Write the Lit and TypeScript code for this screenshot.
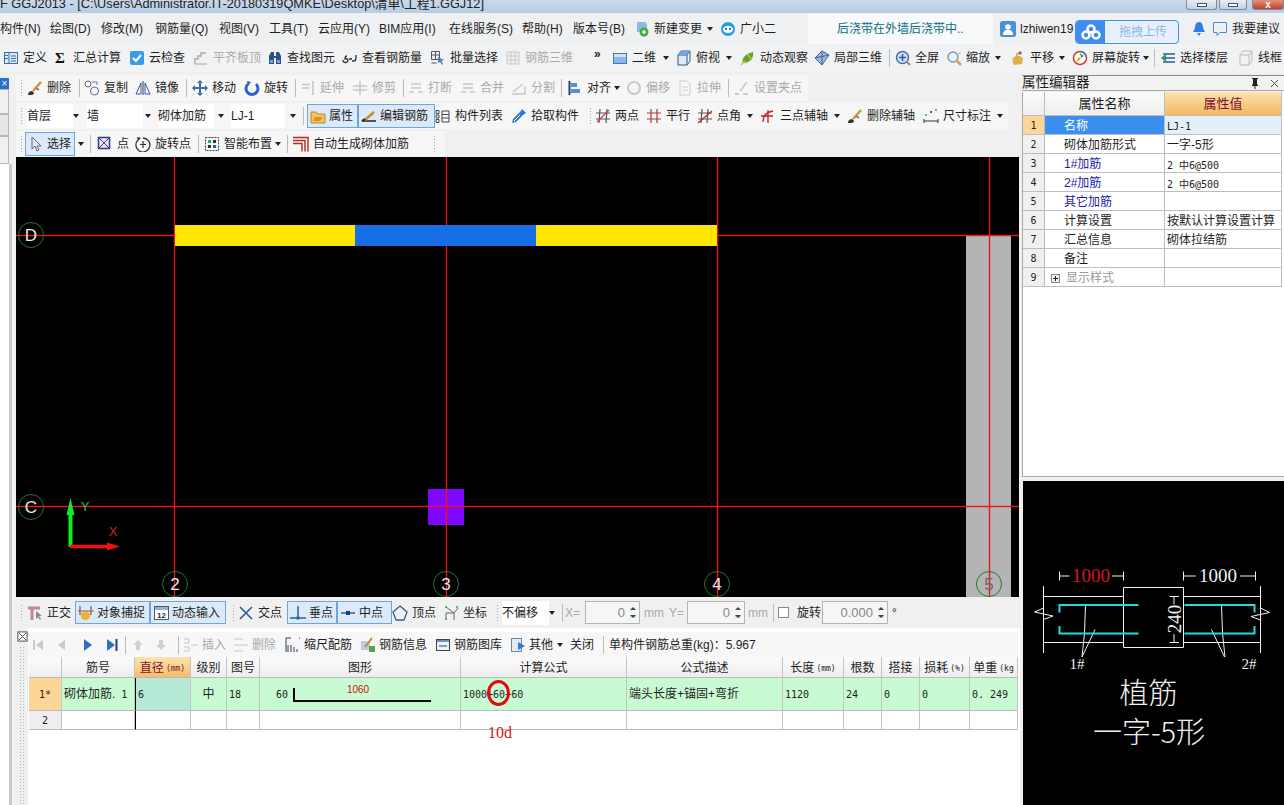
import { LitElement, html, css, svg } from "lit";
import { customElement } from "lit/decorators.js";

const line = (d: string, c = "#333", w = 1) => svg`<path d=${d} fill="none" stroke=${c} stroke-width=${w}/>`;
const fill = (d: string, c: string) => svg`<path d=${d} fill=${c}/>`;

const ICONS: Record<string, any> = {
  def: svg`<rect x="1.5" y="2.5" width="13" height="11" fill="#dce8f6" stroke="#3a6ea5"/>${line("M6 3v10M8 6h5M8 8.500h5M8 11h5M2 5.500h3M2 8.500h3", "#3a6ea5")}`,
  sigma: svg`<text x="2" y="13" class="sig">Σ</text>`,
  cloud: svg`<rect x="1" y="1" width="14" height="14" rx="2" fill="#3c9be8"/>${line("M4 8l3 3 5-6", "#fff", 2)}`,
  lvl: svg`${line("M2 14V9h3V6h3V3h5", "#bbb", 2)}${line("M2 14h12", "#ccc", 2)}`,
  bin: svg`${fill("M2 6l2-4h3v4h2V2h3l2 4v8H9V8H7v6H2z", "#2b4f86")}${fill("M3 10h3v3H3zM10 10h3v3h-3z", "#7fa4d6")}`,
  gls: svg`${line("M1 10a2.500 2.500 0 1 0 5 0c0-2-3-1-3-1 0-2 1-3 2-3M10 11h2c2 0 2-2 2-6M7 9h3", "#333", 1.300)}`,
  batch: svg`${line("M1.500 1.500h8v8h-8zM1.500 5h8M5.500 1.500v8M1.500 13h5", "#556")}${fill("M8 7l6 3-2.500 1 1.500 3-1 1-2-3-2 1z", "#5a7fb5")}`,
  r3d: svg`${line("M2 2h12v12H2zM6 2v12M10 2v12M2 6h12M2 10h12", "#c8c8c8")}`,
  v2d: svg`<rect x="1.500" y="3.500" width="13" height="10" fill="#8db7e8" stroke="#4476b4"/>${fill("M2 4h12v3H2z", "#cfe2f8")}`,
  top: svg`${fill("M2 5h9v10H2z", "#dcecf9")}${line("M2 5h9v10H2zM2 5l3-4h9l-3 4M11 15l3-4V1", "#33597f")}${fill("M5 1h9l-3 4H2z", "#6fa6dc")}`,
  orbit: svg`${fill("M3 13c-2-4 2-9 10-11 1 5-2 11-10 11z", "#5aa832")}${line("M1 15l4-4M7 4l5 6", "#e5b82e", 1.500)}`,
  p3d: svg`${fill("M8 1l7 4-7 10-7-7z", "#9db9dc")}${line("M8 1l7 4-7 10-7-7zM8 1l0 14M1 8l14-3", "#44648e")}`,
  full: svg`<circle cx="7.500" cy="7.500" r="6" fill="#cfe1f6" stroke="#4a6fa5" stroke-width="1.500"/>${line("M7.500 4v7M4 7.500h7", "#2b5aa0", 1.500)}${line("M12 12l3 3", "#b08a2c", 2)}`,
  zoom: svg`<circle cx="7" cy="7" r="5" fill="#e9f1fb" stroke="#7e98b8" stroke-width="1.500"/>${line("M11 11l4 4", "#d9a820", 2.500)}${fill("M13 2l2 1-2 1z", "#d9a820")}`,
  pan: svg`${fill("M4 15c-2-3-2-6 0-8l2-1V3h2v3h2l1 1 2 1-1 6z", "#dcb04a")}${line("M10 1v4M8 3h4", "#555")}`,
  spin: svg`<circle cx="8" cy="8" r="6.500" fill="#fff" stroke="#cf3c2c" stroke-width="1.500"/>${fill("M8 3l4 3-3 2z", "#3aa24c")}${fill("M4 12l3-5 2 2z", "#e0a020")}${line("M8 1.500a6.500 6.500 0 0 1 6 5", "#3a7fd0", 1.500)}`,
  floors: svg`${line("M3 4h12M3 8h12M3 12h12", "#2a5c9c", 1.500)}${fill("M1 8l5-4v8z", "#27a04a")}`,
  wire: svg`${line("M2 5h9v10H2zM2 5l3-4h9l-3 4M11 15l3-4V1", "#bbb")}`,
  doc: svg`${fill("M3 1h8l2 2v8H3z", "#8fb8e8")}<circle cx="10" cy="11" r="4.500" fill="#3fae3f"/>${line("M8 11h4M10 9v4", "#fff", 1.500)}`,
  bot: svg`<circle cx="8" cy="8" r="7" fill="#23a0ea"/><ellipse cx="8" cy="8.500" rx="5" ry="3.500" fill="#fff"/><circle cx="6" cy="8" r="1" fill="#147"/><circle cx="10" cy="8" r="1" fill="#147"/>`,
  user: svg`<rect x="0" y="0" width="16" height="16" rx="2.500" fill="#4a90d8"/><circle cx="8" cy="6" r="2.800" fill="#fff"/>${fill("M3 14c0-4 2-5 5-5s5 1 5 5z", "#fff")}`,
  bell: svg`${fill("M8 1c3 0 4 3 4 6l2 4H2l2-4c0-3 1-6 4-6zM6 12h4l-2 3z", "#2f7fe0")}`,
  say: svg`${line("M1.500 1.500h13v10H8l-3 3v-3H1.500z", "#3f8ee0")}${line("M5 6.500h.1M8 6.500h.1M11 6.500h.1", "#3f8ee0", 1.500)}`,
  brush: svg`${fill("M1 15c0-3 2-4 4-4l2 2c0 2-3 2-6 2z", "#333")}${line("M6 11l8-9", "#c69a3a", 2.500)}${line("M9 8l3 2", "#8a6ec0", 2)}`,
  copy: svg`<circle cx="4" cy="4" r="3" fill="none" stroke="#667"/><circle cx="10.500" cy="11" r="4" fill="none" stroke="#667"/>${line("M8 2h5v3", "#4a7fc0")}`,
  mir: svg`${line("M8 1v14", "#336")}${line("M6 3L1 14h5zM10 3l5 11h-5z", "#2f5f9f")}`,
  move: svg`${fill("M8 0l3 3H9v4h4V5l3 3-3 3V9H9v4h2l-3 3-3-3h2V9H3v2L0 8l3-3v2h4V3H5z", "#3d6eb0")}`,
  rot: svg`${line("M4 4a6 6 0 1 0 8 0", "#2d62c8", 3)}${fill("M3 1l4 1-3 4z", "#2d62c8")}`,
  ext: svg`${line("M2 8h7M2 4.500h8M13 1v14", "#c4c4c4", 1.500)}`,
  trim: svg`${line("M1 6h14M1 10h14M8 1v14", "#c8c8c8", 1.500)}`,
  brk: svg`${line("M1 12h5M10 12h5M3 4h10M3 8h10", "#c8c8c8", 1.500)}`,
  spl: svg`${line("M1 14h14M14 14V6M2 12l10-8", "#c8c8c8", 1.500)}`,
  align: svg`${line("M2.500 1v14", "#1c3f7a", 2)}${fill("M4 3h6v4H4zM4 9h9v4H4z", "#5b8fd0")}`,
  off: svg`<circle cx="8" cy="8" r="6" fill="none" stroke="#c8c8c8" stroke-width="2"/>`,
  str: svg`${line("M3 1h7l3 3v11H3z", "#ccc")}${line("M6 7h5M6 10h5", "#ccc")}`,
  grip2: svg`${line("M1 14h4M9 14h5", "#bbb", 1.500)}${line("M6 11l7-9", "#ccc", 2)}`,
  prop: svg`${fill("M1 4h5l2 2h7v9H1z", "#f0c860")}${line("M1 4h5l2 2h7v9H1z", "#b88a20")}${fill("M5 9h8l-3 4H3z", "#e8892a")}`,
  edit: svg`${line("M1 13h14", "#222", 1.500)}${line("M4 12l9-8", "#c09030", 2.500)}${line("M1 13l3-2", "#222", 2)}`,
  list: svg`${line("M1 2.500h3v3H1zM1 7h3v3H1zM1 11.500h3v3H1zM7 3h7v11H7zM7 6.500h7M7 10h7", "#445")}`,
  pick: svg`${fill("M11 1l4 4-3 2-1 1-6 6-4 1 1-4 6-6 1-1z", "#2d7ad6")}${line("M3 13l6-6", "#fff")}`,
  two: svg`${line("M5 1l-1 14M12 1l-1 14M1 5h14M1 11h14", "#4a5668", 1.200)}${line("M2 14L14 2", "#c84040", 1.200)}`,
  par: svg`${line("M5 1v14M11 1v14M1 5h14M1 11h14", "#a33a3a", 1.200)}`,
  ang: svg`${line("M5 1l-1 14M11 1l-1 14M1 5h14M1 11h14", "#555", 1.200)}${line("M1 15L15 3", "#d02020", 1.300)}`,
  tri: svg`${line("M3 14c0-6 3-10 10-11M8 2v13M1 8h12", "#c82020", 1.300)}`,
  dim: svg`${line("M1 13h14M1 11v4M15 11v4", "#333")}<circle cx="3" cy="7" r="1" fill="#2a7"/><circle cx="8" cy="4" r="1" fill="#333"/><circle cx="13" cy="2" r="1" fill="#2a7"/>`,
  cur: svg`${line("M4 1v12l3-3 2 5 2-1-2-4h4z", "#667")}`,
  pt: svg`<rect x="1.500" y="1.500" width="11" height="11" fill="#dfe4f4" stroke="#2c3f90" stroke-width="1.500"/>${line("M2 2l10 10M12 2L2 12", "#7c2c60")}`,
  rpt: svg`${line("M3 4a7 7 0 1 0 5-2", "#334", 1.300)}${line("M8 5v7M5 8.500h6", "#334", 1.200)}${fill("M2 1l4 1-3 3z", "#334")}`,
  smart: svg`<rect x="1.500" y="1.500" width="13" height="13" fill="none" stroke="#444" stroke-dasharray="2 1"/><rect x="4" y="4" width="3" height="3" fill="#2a6"/><rect x="9" y="9" width="3" height="3" fill="#26a"/><rect x="9" y="4" width="3" height="3" fill="#333"/><rect x="4" y="9" width="3" height="3" fill="#333"/>`,
  auto: svg`${line("M0 1.500h15v14M0 4.500h12v11M0 7.500h9v8", "#b42a2a", 1.400)}`,
  ortho: svg`${line("M1 3h12M5 3v12", "#c08a8a", 3)}${fill("M9 6l0 8 2-2 2 3 1-1-2-3h3z", "#889")}`,
  snap: svg`${line("M2 1v9M13 1v9", "#445")}${fill("M3 9c1-3 8-3 9 0 1 4-2 6-5 6s-5-3-4-6z", "#e6b73a")}${line("M0 6h16", "#d04a20")}`,
  dyn: svg`<rect x="1.500" y="1.500" width="14" height="13" fill="#fff" stroke="#556"/>${fill("M2 2h13v3H2z", "#8db4df")}<text x="4" y="13" class="mini">12</text>`,
  cross: svg`${line("M2 2l12 12M14 2L2 14", "#2d5f9e", 1.700)}`,
  perp: svg`${line("M0 13h16", "#2d5f9e", 1.500)}${line("M8 1v11", "#2d5f9e", 1.500)}<rect x="6.500" y="11.500" width="3" height="3" fill="#2d5f9e"/>`,
  mid: svg`${line("M1 8h14", "#2d5f9e", 1.500)}<rect x="6" y="6" width="4" height="4" fill="#1d3f7e"/>`,
  apex: svg`${line("M8 1l7 6-3 8H4L1 7z", "#2d5f9e", 1.300)}`,
  coord: svg`${line("M3 2l8 6v7M11 8l4-5M3 14V8l8 0", "#667", 1)}<circle cx="3" cy="2" r="1" fill="#2a7"/><circle cx="14" cy="2" r="1" fill="#2a7"/><circle cx="3" cy="14" r="1" fill="#2a7"/>`,
  first: svg`${line("M4 3v10", "#c4c8d0", 2)}${fill("M13 3v10L6 8z", "#c4c8d0")}`,
  prev: svg`${fill("M11 3v10L4 8z", "#c4c8d0")}`,
  next: svg`${fill("M5 2v12l8-6z", "#2f6fc4")}`,
  last: svg`${fill("M3 2v12l8-6z", "#2f6fc4")}${line("M12.500 2v12", "#1f3f84", 2)}`,
  up: svg`${fill("M8 3l5 5h-3v5H6V8H3z", "#cfcfcf")}`,
  down: svg`${fill("M8 13l5-5h-3V3H6v5H3z", "#cfcfcf")}`,
  ins: svg`${line("M1 2h5v4H1M1 10h5v4H1M8 8h7", "#c4c4c4")}`,
  del: svg`${line("M1 2h9M1 8h9M1 14h9M10 8h5", "#c4c4c4")}`,
  scale: svg`${line("M1 15V1h5M14 1h1M3 15V8M6 15V8M9 15v-5M12 15v-3", "#2c3e5a")}`,
  info: svg`${fill("M1 4h9v9H1z", "#b9cde8")}${line("M12 1L5 10", "#c58a2a", 2)}${fill("M9 9h6v6H9z", "#5d9e4f")}`,
  lib: svg`<rect x="1.500" y="2.500" width="13" height="11" fill="#eef4fb" stroke="#345"/>${fill("M2 3h12v2H2z", "#6d93c4")}${line("M4 9h8", "#345")}`,
  other: svg`<rect x="1.500" y="1.500" width="10" height="13" fill="#e4ecf6" stroke="#6688aa"/>${fill("M8 5l7 4-7 4z", "#2f7ad6")}`,
  close: svg`<rect x="1" y="1" width="10" height="10" fill="#fff" stroke="#444"/>${line("M2 2l8 8M10 2l-8 8", "#444")}`,
};

type Item = [number, string, string?, string?, number?];

const MENU: Item[] = [
  [0, "", "构件(N)"], [50, "", "绘图(D)"], [101, "", "修改(M)"], [155, "", "钢筋量(Q)"], [219, "", "视图(V)"], [269, "", "工具(T)"],
  [318, "", "云应用(Y)"], [379, "", "BIM应用(I)"], [449, "", "在线服务(S)"], [522, "", "帮助(H)"], [573, "", "版本号(B)"],
  [634, "doc", "新建变更"], [707, "caret"], [720, "bot", "广小二"], [808, "", "后浇带在外墙后浇带中..", "n", 185],
  [1000, "user", "lzhiwen19"], [1191, "bell"], [1212, "say", "我要建议"],
];
const MAIN: Item[] = [
  [3, "def", "定义"], [53, "sigma", "汇总计算"], [129, "cloud", "云检查"], [193, "lvl", "平齐板顶", "g"], [267, "bin", "查找图元"],
  [342, "gls", "查看钢筋量"], [430, "batch", "批量选择"], [505, "r3d", "钢筋三维", "g"], [594, "", "»", "t"], [612, "v2d", "二维"], [663, "caret"],
  [676, "top", "俯视"], [726, "caret"], [740, "orbit", "动态观察"], [814, "p3d", "局部三维"], [889, "sep"], [895, "full", "全屏"], [946, "zoom", "缩放"],
  [995, "caret"], [1010, "pan", "平移"], [1059, "caret"], [1072, "spin", "屏幕旋转"], [1143, "caret"], [1154, "sep"], [1160, "floors", "选择楼层"], [1238, "wire", "线框"],
];
const BAR2: Item[] = [
  [20, "grip"], [27, "brush", "删除"], [79, "sep"], [84, "copy", "复制"], [135, "mir", "镜像"], [186, "sep"], [192, "move", "移动"], [244, "rot", "旋转"],
  [295, "sep"], [300, "ext", "延伸", "g"], [352, "trim", "修剪", "g"], [403, "sep"], [408, "brk", "打断", "g"], [460, "brk", "合并", "g"], [511, "spl", "分割", "g"],
  [561, "sep"], [567, "align", "对齐"], [614, "caret"], [626, "off", "偏移", "g"], [677, "str", "拉伸", "g"], [728, "sep"], [734, "grip2", "设置夹点", "g"],
];
const BAR3: Item[] = [
  [20, "grip"], [27, "", "首层", "c", 46], [73, "caret"], [87, "", "墙", "c", 56], [145, "caret"], [158, "", "砌体加筋", "c", 56], [218, "caret"], [231, "", "LJ-1", "c", 54],
  [290, "caret"], [303, "sep"], [307, "prop", "属性", "a"], [358, "edit", "编辑钢筋", "a"], [435, "list", "构件列表"], [511, "pick", "拾取构件"], [589, "grip"], [595, "two", "两点"],
  [646, "par", "平行"], [697, "ang", "点角"], [747, "caret"], [760, "tri", "三点辅轴"], [834, "caret"], [847, "brush", "删除辅轴"], [923, "dim", "尺寸标注"], [997, "caret"],
];
const BAR4: Item[] = [
  [20, "grip"], [25, "cur", "选择", "a", 50], [78, "caret"], [90, "sep"], [97, "pt", " 点"], [135, "rpt", "旋转点"], [198, "sep"], [204, "smart", "智能布置"],
  [275, "caret"], [287, "sep"], [293, "auto", "自动生成砌体加筋"], [433, "grip"],
];
const SNAP: Item[] = [
  [20, "grip"], [27, "ortho", "正交"], [75, "snap", "对象捕捉", "a"], [150, "dyn", "动态输入", "a"], [226, "sep0"], [232, "grip"], [238, "cross", "交点"], [287, "perp", "垂点", "a"], [337, "mid", "中点", "a"],
  [392, "apex", "顶点"], [443, "coord", "坐标"], [496, "grip"], [502, "", "不偏移", "c", 48], [549, "caret"], [562, "sep"], [565, "", "X=", "g"], [585, "input", "0", "", 55], [644, "", "mm", "g"],
  [669, "", "Y=", "g"], [687, "input", "0", "", 58], [748, "", "mm", "g"], [773, "sep"], [778, "check"], [797, "", "旋转"], [822, "input", "0.000", "", 66], [892, "", "°"],
];
const GRIDBAR: Item[] = [
  [30, "first"], [54, "prev"], [79, "next"], [104, "last"], [125, "sep"], [130, "up"], [153, "down"], [178, "sep"], [183, "ins", "插入", "g"], [233, "del", "删除", "g"],
  [285, "scale", "缩尺配筋"], [360, "info", "钢筋信息"], [435, "lib", "钢筋图库"], [510, "other", "其他"], [557, "caret"], [570, "", "关闭"], [603, "sep"], [609, "", "单构件钢筋总重(kg)：5.967"],
];

const PROPS: [string, string, string?, boolean?][] = [
  ["名称", "LJ-1", "", true], ["砌体加筋形式", "一字-5形"], ["1#加筋", "2 中6@500", "b", true], ["2#加筋", "2 中6@500", "b", true], ["其它加筋", "", "b"],
  ["计算设置", "按默认计算设置计算"], ["汇总信息", "砌体拉结筋"], ["备注", ""], ["显示样式", "", "g"],
];
const HEAD: [string, string?][] = [["筋号"], ["直径", "(mm)"], ["级别"], ["图号"], ["图形"], ["计算公式"], ["公式描述"], ["长度", "(mm)"], ["根数"], ["搭接"], ["损耗", "(%)"], ["单重", "(kg"]];

@customElement("app-root")
export class AppRoot extends LitElement {
  static styles = css`
    :host { display: block; width: 1284px; height: 805px; overflow: hidden; background: #f0f0f0; position: relative;
      font: 12px/16px "Liberation Sans", "Noto Sans CJK SC", sans-serif; color: #1e1e1e; }
    svg { display: block; flex: none; }
    .title { height: 13px; overflow: hidden; display: flex; background: linear-gradient(#c9d9e9, #b6cde3); font-size: 12.750px; line-height: 8px; color: #222; white-space: nowrap; }
    .winbtns { margin-left: auto; display: flex; gap: 2px; }
    .winbtn { height: 10px; border: 1px solid #7b8da0; border-top: 0; border-radius: 0 0 3px 3px; background: linear-gradient(#e6edf4, #c4d2e0); box-sizing: border-box; display: flex; align-items: center; justify-content: center; }
    .winbtn.min { width: 31px; } .winbtn.max { width: 28px; margin-right: 3px; } .winbtn.cls { width: 32px; background: linear-gradient(#e4907c, #c2402c); color: #fff; font-size: 10px; line-height: 10px; font-weight: bold; }
    .glyph { width: 10px; height: 4px; border: 1px solid #456; box-sizing: border-box; background: #fff; }
    .bar { display: flex; align-items: center; white-space: nowrap; box-sizing: border-box; }
    .cell { flex: none; display: flex; align-items: center; gap: 4px; height: 100%; box-sizing: border-box; overflow: visible; }
    .g { color: #aaa; }
    .hi { margin-top: -9px; font-weight: bold; }
    .menu { height: 31px; background: #eff0f1; width: 1284px; }
    .maintool { height: 28px; background: #f1f2f3; width: 1284px; }
    .notice { background: #f8f9fa; height: 30px; color: #0c6d80; display: flex; align-items: center; padding-left: 29px; box-sizing: border-box; }
    .active { background: #dbe9f8; border: 1px solid #6ea6dc; height: 24px; padding-left: 2px; box-sizing: border-box; display: flex; align-items: center; gap: 3px; width: 100%; }
    .combo { background: #fff; height: 24px; padding-left: 0; display: flex; align-items: center; }
    .caret { width: 0; height: 0; border: 3px solid transparent; border-top: 4px solid #222; border-bottom: 0; }
    .sepl { width: 1px; height: 18px; background: #bdbdbd; }
    .gripl { width: 3px; height: 18px; background-image: radial-gradient(circle, #aaa 1px, transparent 1px); background-size: 3px 3px; }
    .sig { font: bold 15px "Liberation Serif", serif; fill: #111; }
    .mini { font: bold 8px "Liberation Sans", sans-serif; fill: #234; }
    .input { height: 24px; border: 1px solid #b4b4b4; background: #f6f6f6; box-sizing: border-box; display: flex; align-items: center; justify-content: flex-end; color: #888; gap: 5px; padding-right: 3px; width: 100%; font-size: 13px; }
    .spin { display: flex; flex-direction: column; gap: 5px; }
    .spin i { display: block; width: 0; height: 0; border: 3px solid transparent; }
    .spin .u { border-bottom: 3px solid #444; border-top: 0; } .spin .d { border-top: 3px solid #444; border-bottom: 0; }
    .check { width: 11px; height: 11px; border: 1px solid #888; background: #fff; box-sizing: border-box; }
    .overlay { position: absolute; left: 1075px; top: 20px; width: 104px; height: 24px; border: 1px solid #4a90e8; border-radius: 4px; background: #e7f0fc; box-sizing: border-box; display: flex; align-items: center; color: #90b6ea; overflow: hidden; font-size: 12px; }
    .ovl { width: 29px; height: 100%; background: #3f8df3; display: flex; align-items: center; justify-content: center; margin-right: 14px; flex: none; }
    .body { display: flex; height: 733px; }
    .left { width: 1020px; display: flex; flex: none; }
    .strip { width: 16px; flex: none; display: flex; flex-direction: column; position: relative; background: #f0f0f0; }
    .strip-x { margin-top: 6px; height: 11px; width: 9px; background: #2a6fd0; display: flex; align-items: center; justify-content: center; color: #fff; font-size: 10px; line-height: 10px; }
    .strip-p { width: 9px; box-sizing: border-box; border: 1px solid #b8b8b8; border-left: 0; }
    .strip-p.a { height: 25px; } .strip-p.b { height: 22px; background: #e6e6e6; } .strip-p.c { height: 28px; }
    .strip-w { flex: 1; width: 9px; background: #fff; border-right: 3px solid #c9c9c9; }
    .main { width: 1004px; flex: none; display: flex; flex-direction: column; }
    .tools { height: 85px; display: flex; flex-direction: column; padding-top: 3px; box-sizing: border-box; gap: 2px; }
    .tb { height: 26px; background: #f6f6f6; flex: none; }
    .tb.short { height: 25px; }
    .canvas { height: 440px; width: 1003px; background: #000; }
    .canvas svg { width: 1003px; height: 440px; }
    .canvas text { font-family: "Liberation Sans", sans-serif; font-size: 17px; text-anchor: middle; dominant-baseline: central; fill: #e8e8e8; }
    .canvas text.five { fill: #666; }
    .canvas text.ax { font-size: 13px; font-weight: normal; }
    .snapbar { height: 31px; background: #f0f0f0; flex: none; }
    .snapbar .cell .active, .snapbar .input { height: 23px; }
    .gridp { flex: 1; display: flex; position: relative; background: #fff; }
    .gripcol { width: 12px; flex: none; background: #f0f0f0; display: flex; flex-direction: column; align-items: center; padding-top: 3px; gap: 4px; }
    .gripcol i { width: 6px; flex: 1; background-image: radial-gradient(circle, #bbb 1px, transparent 1px); background-size: 3px 3px; }
    .gridm { flex: 1; margin-right: 2px; display: flex; flex-direction: column; }
    .gtb { height: 25px; margin-top: 4px; background: #f7f7f7; flex: none; }
    .gtb .cell { gap: 3px; }
    .trow { display: grid; grid-template-columns: 33px 73px 56px 36px 33px 201px 166px 156px 61px 38px 38px 50px 48px; margin-left: 1px; }
    .trow > div { border-right: 1px solid #c4c4c4; border-bottom: 1px solid #bbb; box-sizing: border-box; display: flex; align-items: center; overflow: hidden; white-space: nowrap; padding-left: 2px; }
    .thead { height: 21px; } .thead > div { justify-content: center; padding: 2px 0 0; font-size: 12px; background: linear-gradient(#fbfbfb, #eee); }
    .thead > .hot { background: linear-gradient(#fde3ae, #f6bd68); color: #7a1030; }
    .unit { font: 8px "DejaVu Sans Mono", monospace; margin-left: 2px; }
    .r1 { height: 33px; background: #c8fbd2; } .r2 { height: 19px; }
    .rn { justify-content: center; padding: 0 !important; font: 10px "DejaVu Sans Mono", monospace; background: #eee; }
    .r1 .rn { background: #fdd596; }
    .d { background: #b6ead6; border-left: 1px solid #000; }
    .r2 .d { background: #fff; }
    .m { font: 10px "DejaVu Sans Mono", monospace; }
    .ctr { justify-content: center; padding: 0 !important; }
    .shape { padding-left: 16px !important; gap: 5px; position: relative; }
    .shape .m { font-size: 10px; }
    .sh1060 { width: 138px; height: 14px; margin-top: 2px; border-left: 2px solid #000; border-bottom: 2px solid #000; box-sizing: border-box; display: flex; justify-content: center; align-items: flex-start; }
    .sh1060 span { color: #c81010; font: 10px "Liberation Sans", sans-serif; margin-top: -4px; margin-right: 10px; line-height: 12px; }
    .ring { position: absolute; left: 471px; top: 52px; width: 17px; height: 20px; border: 3px solid #e00a14; border-radius: 50%; box-sizing: content-box; }
    .tend { position: absolute; left: 472px; top: 96px; color: #d01818; font: 16px "Liberation Serif", serif; }
    .right { flex: 1; display: flex; flex-direction: column; padding-left: 2px; }
    .ptitle { margin-top: 3px; height: 16px; border-top: 1px solid #888; border-bottom: 1px solid #aaa; box-sizing: border-box; font-size: 13.500px; line-height: 14px; display: flex; align-items: center; background: #f2f2f2; }
    .ptitle .rgt { margin-left: auto; display: flex; gap: 10px; align-items: center; padding-right: 5px; }
    .ptable { height: 385px; background: #fff; border-left: 1px solid #aaa; border-bottom: 1px solid #aaa; box-sizing: border-box; margin-top: 1px; }
    .prow { display: grid; grid-template-columns: 22px 120px 117px; height: 19px; }
    .prow > div { border-right: 1px solid #bdbdbd; border-bottom: 1px solid #bdbdbd; box-sizing: border-box; display: flex; align-items: center; white-space: nowrap; overflow: hidden; padding-top: 2px; }
    .phead { height: 24px; } .phead > div { justify-content: center; background: linear-gradient(#fbfbfb, #eee); font-size: 13px; padding-top: 1px; }
    .phead > .hot { background: linear-gradient(#fde3ae, #f3b860); color: #7a0c30; }
    .prow > .pn { justify-content: center; background: #f0f0f0; font: 10px "DejaVu Sans Mono", monospace; padding-top: 0; }
    .pname { padding-left: 19px; } .pval { padding-left: 2px; }
    .pval.mono { font: 10px "DejaVu Sans Mono", "Noto Sans CJK SC", monospace; }
    .sel .pn { background: #fdd596 !important; } .sel .pname { background: #3b90ef; color: #fff; } .sel .pval { background: #e3f0fc; }
    .blue { color: #1a1aa8; } .grey { color: #999; }
    .plus { width: 9px; height: 9px; border: 1px solid #888; margin: 0 6px 0 -13px; box-sizing: border-box; position: relative; background: linear-gradient(#222, #222) center/5px 1px no-repeat, linear-gradient(#222, #222) center/1px 5px no-repeat, #eee; flex: none; }
    .preview { margin-top: 4px; flex: 1; margin-left: 1px; background: #000; }
    .preview svg { width: 260px; height: 324px; }
    .preview .wh { fill: none; stroke: #f2f2f2; stroke-width: 1; }
    .preview .cy { fill: none; stroke: #22dcdc; stroke-width: 2; }
    .preview text { font-family: "Liberation Serif", "Noto Sans CJK SC", serif; fill: #f0f0f0; text-anchor: middle; dominant-baseline: central; }
    .preview .dn { font-size: 19px; } .preview .tag { font-size: 15px; } .preview .cap { font-size: 29px; font-family: "Noto Sans CJK SC", sans-serif; font-weight: 300; }
    .preview .red { fill: #d81820; }
  `;

  private icon(n: string) {
    return html`<svg width="16" height="16" viewBox="0 0 16 16">${ICONS[n]}</svg>`;
  }

  private cell(it: Item) {
    const [, ic, t, fl, w] = it;
    if (ic === "caret") return html`<i class="caret"></i>`;
    if (ic === "sep") return html`<i class="sepl"></i>`;
    if (ic === "sep0") return html``;
    if (ic === "grip") return html`<i class="gripl"></i>`;
    if (ic === "check") return html`<i class="check"></i>`;
    if (ic === "input") return html`<div class="input"><span>${t}</span><span class="spin"><i class="u"></i><i class="d"></i></span></div>`;
    const body = html`${ic ? this.icon(ic) : ""}${t ? html`<span class=${fl === "g" ? "g" : fl === "t" ? "hi" : ""}>${t}</span>` : ""}`;
    if (fl === "a") return html`<div class="active">${body}</div>`;
    if (fl === "c") return html`<div class="combo" style="width:${w}px">${t}</div>`;
    if (fl === "n") return html`<div class="notice" style="width:${w}px">${t}</div>`;
    return body;
  }

  private bar(items: Item[], x0: number, x1: number, cls: string) {
    return html`<div class="bar ${cls}" style="width:${x1 - x0}px;padding-left:${items[0][0] - x0}px">
      ${items.map((it, i) => {
        const next = i + 1 < items.length ? items[i + 1][0] : x1;
        return html`<div class="cell" style="width:${next - it[0]}px">${
          it[1] === "input" || (it[3] === "a" && it[4])
            ? html`<div style="width:${it[4]}px">${this.cell(it)}</div>`
            : this.cell(it)
        }</div>`;
      })}
    </div>`;
  }

  private canvas() {
    const red = "#e8141c";
    const circles: [number, number, string][] = [[31, 235, "D"], [31, 507, "C"], [175, 584, "2"], [446, 584, "3"], [717, 584, "4"], [989, 584, "5"]];
    return html`<div class="canvas"><svg viewBox="16 157 1003 440">
      <rect x="966" y="236" width="45" height="361" fill="#b4b4b4"/>
      <rect x="428" y="489" width="36" height="36" fill="#7f06ff"/>
      ${[174, 446, 717, 989].map((x) => svg`<rect x=${x - 0.2} y="157" width="1.400" height="440" fill=${red}/>`)}
      ${[235, 506].map((y) => svg`<rect x="16" y=${y - 0.2} width="1003" height="1.400" fill=${red}/>`)}
      <rect x="175" y="225" width="180" height="21" fill="#ffe600"/>
      <rect x="355" y="225" width="181" height="21" fill="#176fe6"/>
      <rect x="536" y="225" width="181" height="21" fill="#ffe600"/>
      ${circles.map(([x, y, t]) => svg`<circle cx=${x} cy=${y} r="12.500" fill="none" stroke="#1e7a2a"/><text x=${x} y=${y} class=${t === "5" ? "five" : ""}>${t}</text>`)}
      <path d="M70.500 547V511" stroke="#0fef1f" stroke-width="4"/><path d="M70.500 498l4 17h-8z" fill="#0fef1f"/>
      <path d="M70 546.500h40" stroke="#f01010" stroke-width="3.500"/><path d="M120 546.500l-13 4v-8z" fill="#f01010"/>
      <text x="85" y="506" class="ax" style="fill:#30c040">Y</text>
      <text x="113" y="531" class="ax" style="fill:#d02020">X</text>
    </svg></div>`;
  }

  private preview() {
    return html`<div class="preview"><svg viewBox="1024 481 260 324">
      <path class="wh" d="M1060.500 571.500v9M1060.500 576h10M1113 576h11.500M1124.500 571.500v9M1184.500 571.500v9M1184.500 576h12M1241 576h16M1256.500 571.500v9"/>
      <path class="wh" d="M1124.500 587.500h60v60h-60zM1044.500 596.500h80M1044.500 642.500h80M1184.500 596.500h77M1184.500 642.500h77M1044.500 586v67M1261.500 586v67"/>
      <path class="wh" d="M1044.500 608l-9 4 18.500 4-9.500 3.500M1261.500 608l9 4.500-18.500 4 9.500 3.500"/>
      <path class="wh" d="M1170.500 596.500h9.500M1175 596.500v8M1170.500 642.500h9.500M1175 634v8.500"/>
      <path class="wh" d="M1086.500 605l-1 28-2.500 24M1096 629.500l-13 27.500M1222.500 605l1 28 2.500 24M1212.500 629.500l13 27.500"/>
      <path class="cy" d="M1060.500 612.500V605h79M1060.500 626v7.500h79M1185.500 605h70v7.500M1185.500 633.500h70V626"/>
      <text x="1092" y="575.500" class="dn red">1000</text>
      <text x="1219" y="575.500" class="dn">1000</text>
      <text class="dn" transform="translate(1175 619) rotate(-90)">240</text>
      <text x="1078" y="664" class="tag">1#</text>
      <text x="1250" y="664" class="tag">2#</text>
      <text x="1149.500" y="691" class="cap">植筋</text>
      <text x="1150" y="730" class="cap">一字-5形</text>
    </svg></div>`;
  }

  private grid() {
    return html`<div class="gridp">
      <div class="gripcol">${html`<svg width="11" height="11" viewBox="0 0 12 12">${ICONS.close}</svg>`}<i></i></div>
      <div class="gridm">
        ${this.bar(GRIDBAR, 28, 1018, "gtb")}
        <div class="trow thead"><div></div>${HEAD.map(([t, u], i) => html`<div class=${i === 1 ? "hot" : ""}>${t}${u ? html`<span class="unit">${u}</span>` : ""}</div>`)}</div>
        <div class="trow r1">
          <div class="rn">1*</div><div>砌体加筋.<span class="m">&nbsp;1</span></div><div class="d"><span class="m">6</span></div>
          <div class="ctr">中</div><div><span class="m">18</span></div>
          <div class="shape"><span class="m">60</span><div class="sh1060"><span>1060</span></div></div>
          <div><span class="m">1000+60+60</span></div><div>端头长度+锚固+弯折</div>
          <div><span class="m">1120</span></div><div><span class="m">24</span></div><div><span class="m">0</span></div><div><span class="m">0</span></div><div><span class="m">0. 249</span></div>
        </div>
        <div class="trow r2"><div class="rn">2</div><div></div><div class="d"></div>${Array.from({ length: 10 }, () => html`<div></div>`)}</div>
      </div>
      <div class="ring"></div>
      <div class="tend">10d</div>
    </div>`;
  }

  render() {
    return html`
      <div class="title">F GGJ2013 - [C:\\Users\\Administrator.IT-20180319QMKE\\Desktop\\清单\\工程1.GGJ12]
        <div class="winbtns"><div class="winbtn min"><i class="glyph"></i></div><div class="winbtn max"><i class="glyph"></i></div><div class="winbtn cls">x</div></div>
      </div>
      ${this.bar(MENU, 0, 1284, "menu")}
      ${this.bar(MAIN, 0, 1284, "maintool")}
      <div class="overlay"><div class="ovl"><svg width="20" height="16" viewBox="0 0 20 16"><g fill="none" stroke="#fff" stroke-width="2.500"><circle cx="10" cy="5" r="3.500"/><circle cx="5" cy="11" r="3.500"/><circle cx="15" cy="11" r="3.500"/></g></svg></div>拖拽上传</div>
      <div class="body">
        <div class="left">
          <div class="strip"><div class="strip-x">×</div><div class="strip-p a"></div><div class="strip-p b"></div><div class="strip-p c"></div><div class="strip-w"></div></div>
          <div class="main">
            <div class="tools">
              ${this.bar(BAR2, 16, 808, "tb")}
              ${this.bar(BAR3, 16, 1008, "tb")}
              ${this.bar(BAR4, 16, 445, "tb short")}
            </div>
            ${this.canvas()}
            ${this.bar(SNAP, 16, 905, "snapbar")}
            ${this.grid()}
          </div>
        </div>
        <div class="right">
          <div class="ptitle">属性编辑器<div class="rgt"><svg width="10" height="12" viewBox="0 0 10 12"><path d="M2 1h6v1H7v5l1 1v1H5.500v3h-1V9H2V8l1-1V2H2z" fill="#222"/></svg><svg width="9" height="9" viewBox="0 0 9 9"><path d="M1 1l7 7M8 1L1 8" stroke="#555" fill="none"/></svg></div></div>
          <div class="ptable">
            <div class="prow phead"><div></div><div>属性名称</div><div class="hot">属性值</div></div>
            ${PROPS.map(([n, v, f, mono], i) => html`<div class="prow ${i === 0 ? "sel" : ""}">
              <div class="pn">${i + 1}</div>
              <div class="pname ${f === "b" ? "blue" : f === "g" ? "grey" : ""}">${f === "g" ? html`<i class="plus"></i>` : ""}${n}</div>
              <div class="pval ${mono ? "mono" : ""}">${v}</div></div>`)}
          </div>
          ${this.preview()}
        </div>
      </div>
    `;
  }
}
